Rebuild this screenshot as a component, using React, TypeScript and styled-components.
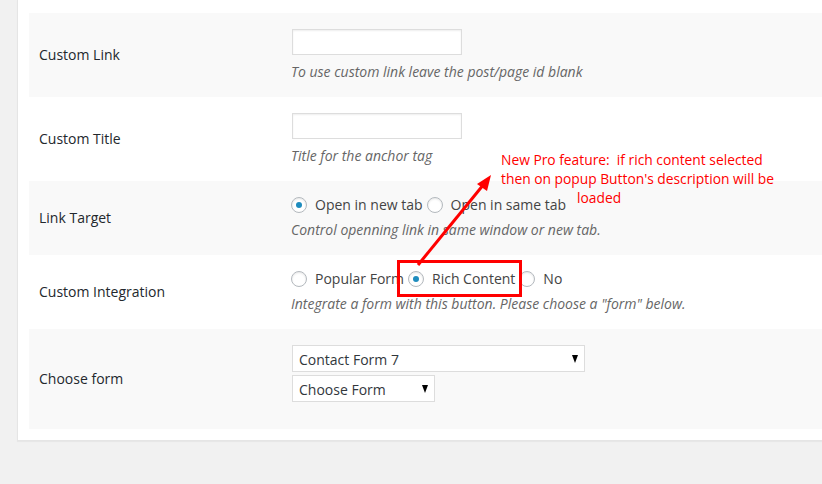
import React from "react";
import styled, { createGlobalStyle } from "styled-components";

const GlobalStyle = createGlobalStyle`
  html, body {
    margin: 0;
    padding: 0;
    background: #f1f1f1;
    overflow: hidden;
    font-family: "Open Sans", "Noto Sans", sans-serif;
  }
`;

const Page = styled.div`
  position: relative;
  width: 822px;
  height: 484px;
  padding-left: 17px;
  box-sizing: border-box;
  overflow: hidden;
`;

const Panel = styled.div`
  background: #fff;
  border: 1px solid #e5e5e5;
  border-top: none;
  border-right: none;
  box-shadow: 0 1px 1px rgba(0, 0, 0, 0.04);
  padding: 13px 0 11px 11px;
  margin-right: -40px;
`;

const Row = styled.div<{ $striped?: boolean }>`
  display: grid;
  grid-template-columns: 262px 1fr;
  background: ${(p) => (p.$striped ? "#f9f9f9" : "#fff")};
`;

const Label = styled.div`
  align-self: center;
  padding-left: 10px;
  font-size: 14px;
  color: #23282d;
  line-height: 20px;
`;

const Field = styled.div`
  padding: 15px 0;
`;

const TextInput = styled.input`
  display: block;
  box-sizing: border-box;
  width: 170px;
  height: 26px;
  margin: 1px 0 0 1px;
  border: 1px solid #ddd;
  box-shadow: inset 0 1px 2px rgba(0, 0, 0, 0.07);
  background: #fff;
  outline: none;
`;

const Description = styled.p<{ $gap: number }>`
  margin: ${(p) => p.$gap}px 0 0;
  font-size: 14px;
  line-height: 20px;
  font-style: italic;
  color: #666;
`;

const RadioGroup = styled.div`
  display: flex;
  align-items: center;
  height: 20px;
  margin-top: -1px;
  font-size: 14px;
  line-height: 20px;
  color: #444;
`;

const RadioItem = styled.label`
  display: flex;
  align-items: center;
  margin-right: 4px;
  white-space: pre;
`;

const RadioCircle = styled.span<{ $checked?: boolean }>`
  position: relative;
  display: inline-block;
  box-sizing: border-box;
  width: 16px;
  height: 16px;
  margin-right: 8px;
  border: 1px solid #b4b9be;
  border-radius: 50%;
  background: #fff;
  box-shadow: inset 0 1px 2px rgba(0, 0, 0, 0.1);

  &::after {
    content: "";
    display: ${(p) => (p.$checked ? "block" : "none")};
    position: absolute;
    left: 4px;
    top: 4px;
    width: 6px;
    height: 6px;
    border-radius: 50%;
    background: #1e8cbe;
  }
`;

const SelectStack = styled.div`
  display: flex;
  flex-direction: column;
  align-items: flex-start;
  gap: 3px;
  margin: 1px 0 12px 1px;
`;

const Select = styled.div<{ $width: number }>`
  position: relative;
  box-sizing: border-box;
  width: ${(p) => p.$width}px;
  height: 27px;
  padding-left: 6px;
  border: 1px solid #ddd;
  background: #fff;
  font-size: 14px;
  line-height: 27px;
  color: #32373c;

  &::after {
    content: "";
    position: absolute;
    right: 6px;
    top: 9px;
    border-left: 3.5px solid transparent;
    border-right: 3.5px solid transparent;
    border-top: 8px solid #000;
  }
`;

const Callout = styled.div`
  position: absolute;
  left: 397px;
  top: 260px;
  width: 125px;
  height: 37px;
  box-sizing: border-box;
  border: 3px solid #f00;
`;

const Note = styled.div`
  position: absolute;
  left: 501px;
  top: 150px;
  font-family: "Open Sans", "Noto Sans", sans-serif;
  font-size: 13.8px;
  line-height: 19px;
  color: #f00;
  white-space: pre;
`;

const NoteLast = styled.div`
  padding-left: 76px;
`;

const ArrowSvg = styled.svg`
  position: absolute;
  left: 0;
  top: 0;
  pointer-events: none;
`;

function Radio({ label, checked }: { label: string; checked?: boolean }) {
  return (
    <RadioItem>
      <RadioCircle $checked={checked} />
      {label}
    </RadioItem>
  );
}

export default function App() {
  return (
    <>
      <GlobalStyle />
      <Page>
        <Panel>
          <Row $striped>
            <Label>Custom Link</Label>
            <Field>
              <TextInput />
              <Description $gap={7}>To use custom link leave the post/page id blank</Description>
            </Field>
          </Row>
          <Row>
            <Label>Custom Title</Label>
            <Field>
              <TextInput />
              <Description $gap={7}>Title for the anchor tag</Description>
            </Field>
          </Row>
          <Row $striped>
            <Label>Link Target</Label>
            <Field>
              <RadioGroup>
                <Radio label="Open in new tab" checked />
                <Radio label="Open in same tab" />
              </RadioGroup>
              <Description $gap={5}>Control openning link in same window or new tab.</Description>
            </Field>
          </Row>
          <Row>
            <Label>Custom Integration</Label>
            <Field>
              <RadioGroup>
                <Radio label="Popular Form" />
                <Radio label="Rich Content" checked />
                <Radio label="No" />
              </RadioGroup>
              <Description $gap={5}>
                Integrate a form with this button. Please choose a "form" below.
              </Description>
            </Field>
          </Row>
          <Row $striped>
            <Label>Choose form</Label>
            <Field>
              <SelectStack>
                <Select $width={293}>Contact Form 7</Select>
                <Select $width={143}>Choose Form</Select>
              </SelectStack>
            </Field>
          </Row>
        </Panel>

        <Callout />
        <ArrowSvg width="822" height="484" viewBox="0 0 822 484">
          <line x1="418" y1="265" x2="484" y2="184" stroke="#f00" strokeWidth="3" />
          <polygon points="491,175 477,184 487,191" fill="#f00" />
        </ArrowSvg>
        <Note>
          <div>New Pro feature:  if rich content selected</div>
          <div>then on popup Button's description will be</div>
          <NoteLast>loaded</NoteLast>
        </Note>
      </Page>
    </>
  );
}
